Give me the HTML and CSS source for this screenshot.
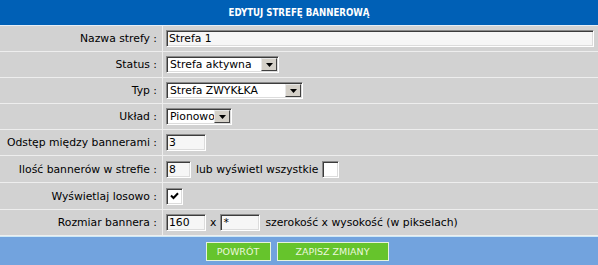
FILE: index.html
```html
<!DOCTYPE html>
<html lang="pl">
<head>
<meta charset="utf-8">
<title>Edytuj strefę bannerową</title>
<link rel="stylesheet" href="styles.css">
</head>
<body>
<div class="panel">
  <div class="title">EDYTUJ STREFĘ BANNEROWĄ</div>

  <div class="row">
    <div class="label">Nazwa strefy :</div>
    <div class="field"><input class="txt w-full" type="text" value="Strefa 1"></div>
  </div>

  <div class="row">
    <div class="label">Status :</div>
    <div class="field">
      <div class="select w-status"><span class="sel-val">Strefa aktywna</span><span class="sel-btn"><svg width="7" height="4" viewBox="0 0 7 4"><path d="M0 0H7L3.5 4Z" fill="#000"/></svg></span></div>
    </div>
  </div>

  <div class="row">
    <div class="label">Typ :</div>
    <div class="field">
      <div class="select w-typ"><span class="sel-val">Strefa ZWYKŁKA</span><span class="sel-btn"><svg width="7" height="4" viewBox="0 0 7 4"><path d="M0 0H7L3.5 4Z" fill="#000"/></svg></span></div>
    </div>
  </div>

  <div class="row">
    <div class="label">Układ :</div>
    <div class="field">
      <div class="select w-uklad"><span class="sel-val">Pionowo</span><span class="sel-btn"><svg width="7" height="4" viewBox="0 0 7 4"><path d="M0 0H7L3.5 4Z" fill="#000"/></svg></span></div>
    </div>
  </div>

  <div class="row">
    <div class="label">Odstęp między bannerami :</div>
    <div class="field"><input class="txt w-40" type="text" value="3"></div>
  </div>

  <div class="row tall">
    <div class="label">Ilość bannerów w strefie :</div>
    <div class="field">
      <input class="txt w-25" type="text" value="8">
      <span class="note">lub wyświetl wszystkie</span>
      <span class="check"></span>
    </div>
  </div>

  <div class="row tall">
    <div class="label">Wyświetlaj losowo :</div>
    <div class="field">
      <span class="check"><svg width="9" height="8" viewBox="0 0 9 8"><path d="M1 3.5L3.5 6L8 1.2" fill="none" stroke="#000" stroke-width="2"/></svg></span>
    </div>
  </div>

  <div class="row">
    <div class="label">Rozmiar bannera :</div>
    <div class="field">
      <input class="txt w-40" type="text" value="160">
      <span class="note x">x</span>
      <input class="txt w-40" type="text" value="*">
      <span class="note">szerokość x wysokość (w pikselach)</span>
    </div>
  </div>

  <div class="footer">
    <span class="btn btn-back">POWRÓT</span>
    <span class="btn btn-save">ZAPISZ ZMIANY</span>
  </div>
</div>
</body>
</html>
```

FILE: styles.css
```css
html, body {
  margin: 0;
  padding: 0;
  background: #d2d2d2;
}

.panel {
  width: 598px;
  font-family: "DejaVu Sans", Verdana, sans-serif;
  font-size: 11px;
  color: #000;
}

.title {
  height: 25px;
  background: #0060b6;
  border-bottom: 1px solid #e6eef6;
  color: #fff;
  font-family: "DejaVu Sans Condensed", "DejaVu Sans", sans-serif;
  font-weight: bold;
  font-size: 9.6px;
  display: flex;
  align-items: center;
  justify-content: center;
}

.row {
  display: flex;
  height: 25px;
  background: #d2d2d2;
  border-bottom: 1px solid #eeeeee;
}
.row.tall { height: 26px; }

.label {
  width: 157px;
  padding-right: 5px;
  border-right: 1px solid #eeeeee;
  display: flex;
  align-items: center;
  justify-content: flex-end;
  white-space: nowrap;
  font-size: 10.8px;
}

.field {
  flex: 1;
  display: flex;
  align-items: center;
  padding-left: 3px;
  gap: 4px;
  white-space: nowrap;
  font-size: 10.8px;
}

.txt {
  box-sizing: border-box;
  height: 17px;
  margin: 0;
  padding: 0 0 0 2px;
  font: inherit;
  font-size: 10.8px;
  color: #000;
  background: #f6f6f6;
  border: 1px solid;
  border-color: #8a8a8a #ffffff #ffffff #8a8a8a;
  box-shadow: inset 1px 1px 0 #3c3c3c, inset -1px -1px 0 #dcdcdc;
  outline: none;
}
.w-full { width: 428px; }
.w-40 { width: 40px; }
.w-25 { width: 25px; }

.select {
  box-sizing: border-box;
  height: 17px;
  display: flex;
  align-items: stretch;
  background: #ffffff;
  border: 1px solid;
  border-color: #8a8a8a #ffffff #ffffff #8a8a8a;
  box-shadow: inset 1px 1px 0 #3c3c3c, inset -1px -1px 0 #dcdcdc;
  padding: 1px;
}
.w-status { width: 113px; }
.w-typ { width: 137px; }
.w-uklad { width: 66px; }

.sel-val {
  flex: 1;
  display: flex;
  align-items: center;
  padding-left: 2px;
  overflow: hidden;
}

.sel-btn {
  width: 16px;
  box-sizing: border-box;
  background: #d4d0c8;
  border: 1px solid;
  border-color: #e8e8e8 #404040 #404040 #e8e8e8;
  display: flex;
  align-items: center;
  justify-content: center;
}

.note { margin-left: 1px; }
.note.x { margin: 0; }

.check {
  box-sizing: border-box;
  width: 17px;
  height: 17px;
  background: #ffffff;
  border: 1px solid;
  border-color: #8a8a8a #ffffff #ffffff #8a8a8a;
  box-shadow: inset 1px 1px 0 #3c3c3c, inset -1px -1px 0 #dcdcdc;
  display: inline-flex;
  align-items: center;
  justify-content: center;
}

.footer {
  height: 29px;
  background: #72a3de;
  border-top: 1px solid #cce8f6;
  display: flex;
  align-items: center;
  justify-content: center;
  gap: 6px;
  padding-right: 4px;
}

.btn {
  box-sizing: border-box;
  height: 19px;
  background: #66c42c;
  border: 1px solid #e6f4dc;
  color: #eaf7dc;
  font-size: 9.5px;
  display: flex;
  align-items: center;
  justify-content: center;
}
.btn-back { width: 65px; }
.btn-save { width: 112px; }
```
